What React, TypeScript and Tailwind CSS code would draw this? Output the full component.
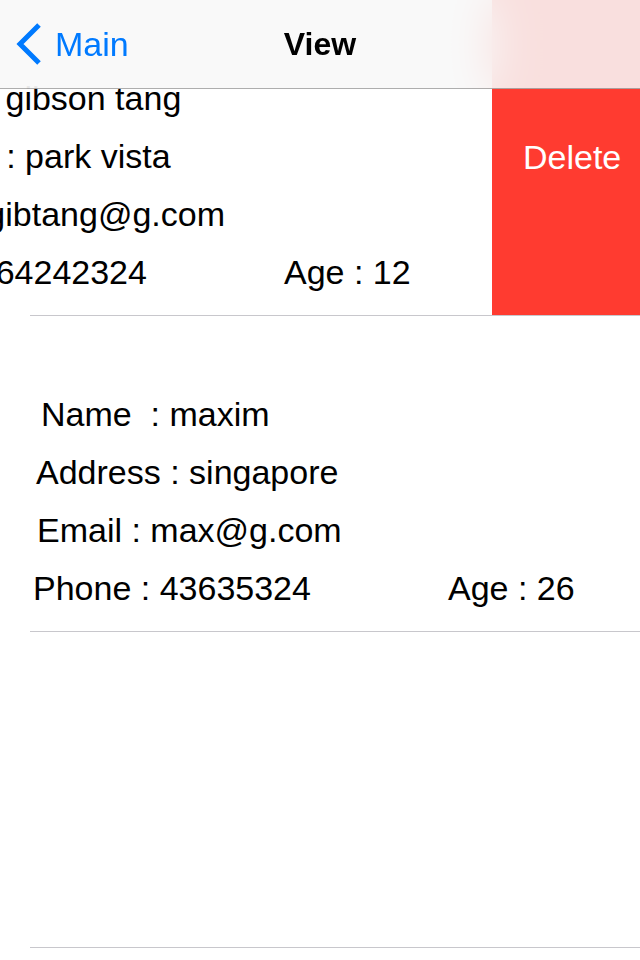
import React from 'react';

type Person = {
  name: string;
  address: string;
  email: string;
  phone: string;
  age: number;
};

const people: Person[] = [
  { name: 'gibson tang', address: 'park vista', email: 'gibtang@g.com', phone: '64242324', age: 12 },
  { name: 'maxim', address: 'singapore', email: 'max@g.com', phone: '43635324', age: 26 },
];

function RowContent({ p }: { p: Person }) {
  return (
    <div className="pt-[69px] text-[34px] text-black whitespace-nowrap">
      <div className="h-[58px] leading-[58px] ml-[41px]">Name&nbsp; : {p.name}</div>
      <div className="h-[58px] leading-[58px] ml-[36px]">Address : {p.address}</div>
      <div className="h-[58px] leading-[58px] ml-[37px]">Email : {p.email}</div>
      <div className="h-[58px] leading-[58px] ml-[33px] flex">
        <span className="w-[415px] shrink-0">Phone : {p.phone}</span>
        <span>Age : {p.age}</span>
      </div>
    </div>
  );
}

function Separator() {
  return <div className="h-px ml-[30px] bg-[#c8c7cc]" />;
}

export default function App() {
  return (
    <div
      className="relative w-[640px] h-[960px] overflow-hidden bg-white"
      style={{ fontFamily: '"Liberation Sans", Arial, sans-serif' }}
    >
      <div className="flex flex-col">
        {/* swiped row */}
        <div className="flex h-[315px] overflow-hidden">
          <div className="w-[656px] shrink-0 ml-[-164px]">
            <RowContent p={people[0]} />
          </div>
          <div className="w-[148px] shrink-0 bg-[#ff3b30] flex items-center pl-[31px] text-white text-[34px]">
            Delete
          </div>
        </div>
        <Separator />

        <div className="h-[315px]">
          <RowContent p={people[1]} />
        </div>
        <Separator />

        <div className="h-[315px]" />
        <Separator />
      </div>

      {/* navigation bar */}
      <div className="absolute top-0 inset-x-0 h-[89px] border-b border-black/30 bg-[rgba(248,248,248,0.87)] backdrop-blur-xl flex items-center">
        <div className="absolute left-[14px] top-0 h-[88px] flex items-center text-[#007aff]">
          <svg width="30" height="42" viewBox="0 0 30 42">
            <path d="M25 2 L6 21 L25 40" fill="none" stroke="#007aff" strokeWidth="5" strokeLinecap="butt" strokeLinejoin="miter" />
          </svg>
          <span className="ml-[11px] text-[34px] leading-none">Main</span>
        </div>
        <div className="w-full text-center text-[32px] font-bold text-black leading-none">View</div>
      </div>
    </div>
  );
}
